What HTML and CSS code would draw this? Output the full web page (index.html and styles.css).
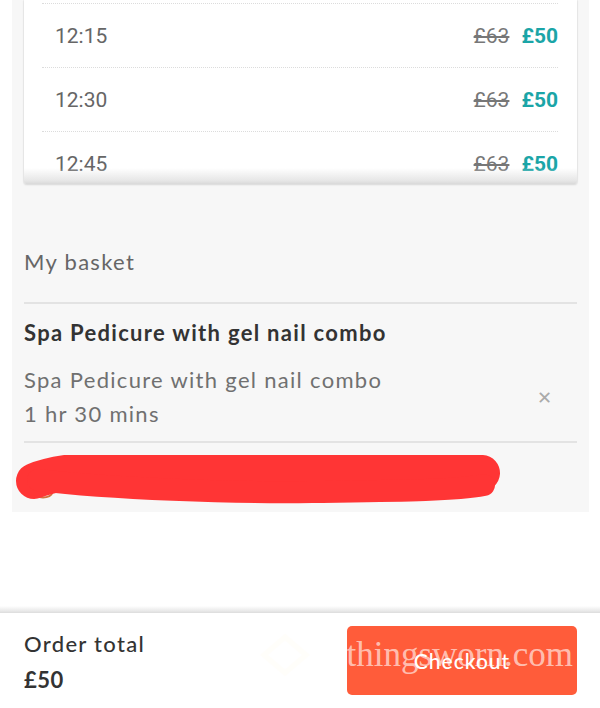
FILE: index.html
```html
<!DOCTYPE html>
<html>
<head>
<meta charset="utf-8">
<link rel="stylesheet" href="styles.css">
</head>
<body>
<div class="page">
  <div class="panel">
    <div class="card">
      <div class="slot"><span class="time">12:15</span><span class="prices"><s class="old">£63</s><b class="new">£50</b></span></div>
      <div class="slot"><span class="time">12:30</span><span class="prices"><s class="old">£63</s><b class="new">£50</b></span></div>
      <div class="slot"><span class="time">12:45</span><span class="prices"><s class="old">£63</s><b class="new">£50</b></span></div>
    </div>
    <div class="basket">
      <div class="basket-head">My basket</div>
      <div class="item">
        <div class="item-title">Spa Pedicure with gel nail combo</div>
        <div class="item-row">
          <div class="item-desc">
            <div>Spa Pedicure with gel nail combo</div>
            <div>1 hr 30 mins</div>
          </div>
          <span class="remove">&#x2715;</span>
        </div>
      </div>
      <div class="scribble">
        <svg width="500" height="56" viewBox="0 0 500 56">
          <ellipse cx="31" cy="38" rx="9" ry="4.5" fill="none" stroke="#d4703e" stroke-width="2"/>
          <path d="M22 26 C 60 10, 140 14, 220 11 C 300 9, 380 13, 470 18" stroke="#ff3535" stroke-width="36" stroke-linecap="round" fill="none"/>
          <path d="M26 25 C 100 34, 220 38, 300 37 C 380 36, 440 36, 472 30" stroke="#ff3535" stroke-width="22" stroke-linecap="round" fill="none"/>
        </svg>
      </div>
    </div>
  </div>
  <div class="spacer"></div>
  <div class="footer">
    <div class="total">
      <div class="total-label">Order total</div>
      <div class="total-value">£50</div>
    </div>
    <button class="checkout">Checkout</button>
    <div class="watermark">
      <svg class="wm-logo" width="50" height="44" viewBox="0 0 50 44"><path d="M25 4 L46 22 L25 40 L4 22 Z" fill="none" stroke="#fffbe8" stroke-width="5"/></svg>
      <span class="wm-text">allthingsworn.com</span>
    </div>
  </div>
</div>
</body>
</html>
```
FILE: styles.css
```css
* { box-sizing: border-box; }
html, body { margin: 0; padding: 0; background: #fff; }
.page { width: 600px; height: 708px; overflow: hidden; display: flex; flex-direction: column; }
.panel {
  margin: 0 11px 0 12px;
  background: #f7f7f7;
  padding: 0 12px 12px;
  height: 512px;
  flex: none;
}
.card {
  position: relative;
  background: #fff;
  height: 184px;
  padding: 3px 19px 0 18px;
  overflow: hidden;
  box-shadow: 0 1px 2px rgba(0,0,0,0.12), 1px 0 1px rgba(0,0,0,0.04), -1px 0 1px rgba(0,0,0,0.04);
  border-radius: 0 0 2px 2px;
}
.card::after {
  content: "";
  position: absolute;
  left: 0; right: 0; bottom: 0;
  height: 16px;
  background: linear-gradient(to bottom, rgba(255,255,255,0), #e6e6e6 80%, #d9d9d9);
}
.slot {
  height: 64px;
  border-top: 1px dotted #dcdcdc;
  display: flex;
  align-items: center;
  justify-content: space-between;
  padding-left: 13px;
  font-family: Roboto, "Liberation Sans", sans-serif;
  font-size: 21px;
}
.time { color: #666; }
.prices { display: flex; gap: 12px; align-items: center; }
.old { color: #777; text-decoration: line-through; text-decoration-thickness: 1.5px; }
.new { color: #1ba5a7; font-weight: 700; }
.basket { font-family: Lato, "Noto Sans", sans-serif; letter-spacing: 1.3px; }
.basket-head {
  margin-top: 63px;
  line-height: 30px;
  font-size: 22px;
  color: #666;
  padding-bottom: 25px;
  border-bottom: 2px solid #e3e3e3;
}
.item { padding: 14px 0 10px; border-bottom: 2px solid #e3e3e3; }
.item-title { font-size: 22px; font-weight: 700; color: #333; line-height: 30px; }
.item-row { display: flex; align-items: center; justify-content: space-between; margin-top: 15px; }
.item-desc { font-size: 22px; color: #707070; line-height: 34px; }
.remove { color: #aaa; font-size: 18px; font-weight: 700; margin-right: 25px; font-family: "DejaVu Sans", sans-serif; letter-spacing: 0; }
.scribble { margin: 12px 0 0 -12px; height: 56px; }
.scribble svg { display: block; }
.spacer { height: 101px; flex: none; background: linear-gradient(to bottom, #fff 94px, #e8e8e8 99px, #dcdcdc); }
.footer {
  position: relative;
  flex: none;
  height: 95px;
  background: #fff;
  display: flex;
  justify-content: space-between;
  align-items: flex-start;
  padding: 13px 23px 0 24px;
  font-family: Lato, "Noto Sans", sans-serif;
}
.total { color: #333; padding-top: 2px; letter-spacing: 1.3px; }
.total-label { font-size: 22px; font-weight: 500; line-height: 32px; }
.total-value { font-size: 22px; font-weight: 700; line-height: 40px; letter-spacing: 0.5px; }
.checkout {
  width: 230px;
  height: 69px;
  border: 0;
  border-radius: 5px;
  background: #ff5c3a;
  color: #fff;
  font-family: Lato, "Noto Sans", sans-serif;
  font-size: 21px;
  font-weight: 500;
  letter-spacing: 1px;
  padding: 0;
}
.watermark {
  position: absolute;
  right: 27px;
  top: 20px;
  display: flex;
  align-items: center;
  gap: 2px;
  pointer-events: none;
}
.wm-logo { opacity: 0.2; }
.wm-text {
  font-family: "Liberation Serif", serif;
  font-size: 35px;
  color: rgba(255,255,255,0.62);
}
```
